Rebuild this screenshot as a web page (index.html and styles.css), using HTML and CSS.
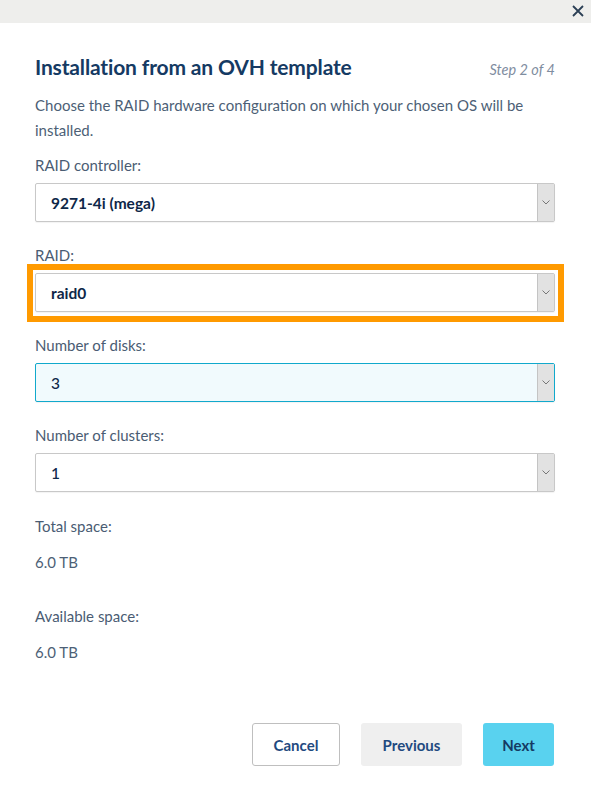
FILE: index.html
```html
<!DOCTYPE html>
<html lang="en">
<head>
<meta charset="utf-8">
<title>Installation from an OVH template</title>
<link rel="stylesheet" href="styles.css">
</head>
<body>
<div class="topbar">
  <button class="close" aria-label="Close">
    <svg width="12" height="12" viewBox="0 0 12 12"><path d="M1 1L11 11M11 1L1 11" stroke="#2b3f55" stroke-width="1.8" fill="none"/></svg>
  </button>
</div>
<div class="modal">
  <div class="head">
    <h1 class="title">Installation from an OVH template</h1>
    <span class="step">Step 2 of 4</span>
  </div>
  <p class="desc">Choose the RAID hardware configuration on which your chosen OS will be installed.</p>

  <div class="field">
    <label class="label">RAID controller:</label>
    <div class="select"><span class="value">9271-4i (mega)</span><span class="arrow"><svg width="8" height="5" viewBox="0 0 8 5"><path d="M0.5 0.5L4 4L7.5 0.5" stroke="#777" fill="none"/></svg></span></div>
  </div>

  <div class="field">
    <label class="label">RAID:</label>
    <div class="select highlight"><span class="value">raid0</span><span class="arrow"><svg width="8" height="5" viewBox="0 0 8 5"><path d="M0.5 0.5L4 4L7.5 0.5" stroke="#777" fill="none"/></svg></span></div>
  </div>

  <div class="field">
    <label class="label">Number of disks:</label>
    <div class="select focused"><span class="value normal">3</span><span class="arrow"><svg width="8" height="5" viewBox="0 0 8 5"><path d="M0.5 0.5L4 4L7.5 0.5" stroke="#777" fill="none"/></svg></span></div>
  </div>

  <div class="field">
    <label class="label">Number of clusters:</label>
    <div class="select"><span class="value normal">1</span><span class="arrow"><svg width="8" height="5" viewBox="0 0 8 5"><path d="M0.5 0.5L4 4L7.5 0.5" stroke="#777" fill="none"/></svg></span></div>
  </div>

  <div class="info">
    <div class="label">Total space:</div>
    <div class="info-value">6.0 TB</div>
  </div>
  <div class="info">
    <div class="label">Available space:</div>
    <div class="info-value">6.0 TB</div>
  </div>

  <div class="actions">
    <button class="btn btn-cancel">Cancel</button>
    <button class="btn btn-prev">Previous</button>
    <button class="btn btn-next">Next</button>
  </div>
</div>
</body>
</html>
```
FILE: styles.css
```css
* { box-sizing: border-box; }
html, body { margin: 0; padding: 0; background: #fff; }
body {
  font-family: Lato, "Liberation Sans", sans-serif;
  color: #4d5f76;
  width: 591px;
  height: 793px;
  overflow: hidden;
}
.topbar {
  height: 23px;
  background: #eeeeec;
  display: flex;
  justify-content: flex-end;
  align-items: center;
}
.close {
  border: 0;
  background: transparent;
  padding: 0;
  margin-right: 7px;
  margin-top: -2px;
  width: 12px;
  height: 12px;
  display: flex;
}
.modal {
  padding: 31px 36px 0 35px;
}
.head {
  display: flex;
  justify-content: space-between;
  align-items: baseline;
  height: 28px;
}
.title {
  margin: 0;
  font-size: 21px;
  font-weight: 700;
  color: #153a63;
  letter-spacing: -0.15px;
}
.step {
  font-size: 14.5px;
  font-style: italic;
  color: #7f8d9f;
}
.desc {
  margin: 11px 0 0;
  font-size: 15px;
  line-height: 25px;
  color: #4d5f76;
}
.field { margin-top: 12px; }
.field + .field { margin-top: 23px; }
.label {
  display: block;
  font-size: 15px;
  line-height: 20px;
  color: #4a5c73;
}
.select {
  position: relative;
  margin-top: 8px;
  height: 39px;
  border: 1px solid #c8c8c8;
  border-radius: 2px;
  background: #fff;
  display: flex;
  align-items: stretch;
  box-shadow: 0 1px 1px rgba(0,0,0,0.05);
}
.value {
  flex: 1;
  display: flex;
  align-items: center;
  padding-left: 15px;
  font-size: 15.5px;
  font-weight: 700;
  color: #0e2748;
}
.value.normal { font-weight: 500; }
.arrow {
  width: 17px;
  background: #e2e2e2;
  border-left: 1px solid #c4c4c4;
  display: flex;
  align-items: center;
  justify-content: center;
}
.highlight::after {
  content: "";
  position: absolute;
  top: -10px;
  left: -9px;
  right: -10px;
  bottom: -11px;
  border: 6px solid #ff9a00;
  pointer-events: none;
}
.focused {
  border-color: #11a9cc;
  background: #f1fafd;
}
.info { margin-top: 24px; }
.info + .info { margin-top: 34px; }
.info-value {
  margin-top: 16px;
  font-size: 15px;
  line-height: 20px;
  color: #4d5f76;
}
.actions {
  margin-top: 61px;
  margin-right: 1px;
  display: flex;
  justify-content: flex-end;
  gap: 21px;
}
.btn {
  height: 43px;
  border-radius: 3px;
  font-family: Lato, "Liberation Sans", sans-serif;
  font-size: 15px;
  font-weight: 700;
  color: #1f4a80;
  border: 1px solid transparent;
  padding: 0;
}
.btn-cancel { width: 88px; background: #fff; border-color: #bfbfbf; }
.btn-prev { width: 101px; background: #efefef; }
.btn-next { width: 71px; background: #59d2ef; color: #153a63; }
```
